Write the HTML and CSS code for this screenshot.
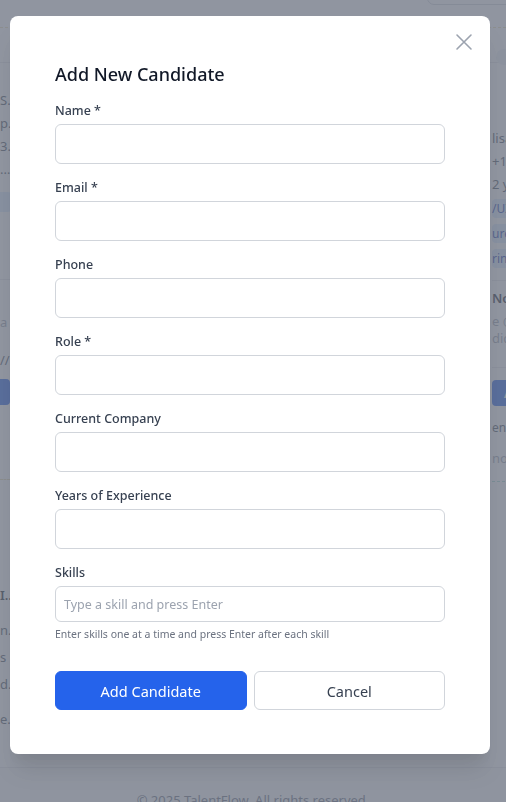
FILE: index.html
```html
<!DOCTYPE html>
<html lang="en">
<head>
<meta charset="utf-8">
<title>Add New Candidate</title>
<link rel="stylesheet" href="styles.css">
</head>
<body>
<div class="page">
  <header class="topbar"><div class="topbar-btn"></div></header>
  <div class="subbar"></div>
  <main class="main">
    <section class="col col-left">
      <p class="bg-t l1">Senior Designer</p>
      <p class="bg-t l2">product@acme.io</p>
      <p class="bg-t l3">3 years</p>
      <p class="bg-t l4">...</p>
      <span class="bg-pill"></span>
      <div class="bg-rule r1"></div>
      <p class="bg-t l5">a</p>
      <p class="bg-t l6">//</p>
      <div class="bg-btn"></div>
      <div class="bg-dash"></div>
      <p class="bg-h l7">ICONS</p>
      <p class="bg-t l8">name</p>
      <p class="bg-t l9">s</p>
      <p class="bg-t l10">dis</p>
      <p class="bg-t l11">es</p>
    </section>
    <section class="col col-mid"></section>
    <section class="col col-right">
      <span class="bg-dot"></span>
      <p class="bg-t rr1">lisa@mail.com</p>
      <p class="bg-t rr2">+1 555 0100</p>
      <p class="bg-t rr3">2 years</p>
      <span class="bg-tag">/UX</span>
      <span class="bg-tag">ures</span>
      <span class="bg-tag">ring</span>
      <div class="bg-rule r2"></div>
      <p class="bg-h rr4">Notes</p>
      <p class="bg-t rr5">e @team</p>
      <p class="bg-t rr6">didate</p>
      <div class="bg-rule r3"></div>
      <div class="bg-btn bg-btn-r">A</div>
      <p class="bg-t rr7">ent</p>
      <p class="bg-t rr8">no</p>
      <div class="bg-dash teal"></div>
    </section>
  </main>
  <footer class="footer">© 2025 TalentFlow. All rights reserved.</footer>
</div>

<div class="overlay">
  <div class="modal">
    <button class="close" type="button" aria-label="Close">
      <svg width="24" height="24" viewBox="0 0 24 24" fill="none" stroke="currentColor" stroke-width="1.6" stroke-linecap="round"><path d="M5 5L19 19M19 5L5 19"/></svg>
    </button>
    <h2 class="title">Add New Candidate</h2>
    <form class="form">
      <div class="field"><label class="label">Name *</label><input class="input" type="text"></div>
      <div class="field"><label class="label">Email *</label><input class="input" type="text"></div>
      <div class="field"><label class="label">Phone</label><input class="input" type="text"></div>
      <div class="field"><label class="label">Role *</label><input class="input" type="text"></div>
      <div class="field"><label class="label">Current Company</label><input class="input" type="text"></div>
      <div class="field"><label class="label">Years of Experience</label><input class="input" type="text"></div>
      <div class="field">
        <label class="label">Skills</label>
        <input class="input input-sm" type="text" placeholder="Type a skill and press Enter">
        <p class="help">Enter skills one at a time and press Enter after each skill</p>
      </div>
      <div class="actions">
        <button class="btn btn-primary" type="button">Add Candidate</button>
        <button class="btn btn-secondary" type="button">Cancel</button>
      </div>
    </form>
  </div>
</div>
</body>
</html>
```
FILE: styles.css
```css
* { box-sizing: border-box; }
html, body { margin: 0; padding: 0; }
body {
  width: 506px;
  height: 802px;
  overflow: hidden;
  font-family: "Noto Sans", "Open Sans", sans-serif;
  background: #f9fafb;
  color: #374151;
}

/* ---------- background page ---------- */
.page { width: 506px; height: 802px; overflow: hidden; display: flex; flex-direction: column; }
.page > * { flex-shrink: 0; }
.topbar {
  height: 28px;
  border-bottom: 1px dashed #e9dfb6;
  display: flex;
  justify-content: flex-end;
  background: #fff;
}
.topbar-btn {
  width: 110px;
  height: 36px;
  margin-top: -31px;
  margin-right: -31px;
  border: 1px solid #d1d5db;
  border-radius: 7px;
  background: #fff;
}
.subbar { height: 35px; border-bottom: 1px solid #e5e7eb; background: #fff; }
.main {
  display: grid;
  grid-template-columns: 10px 480px 120px;
  height: 705px;
  border-bottom: 1px solid #e5e7eb;
}
.col { display: flex; flex-direction: column; min-width: 0; }
.col-left { background: #fff; }
.col-right { background: #fff; padding-left: 2px; }
.bg-t, .bg-h {
  margin: 0;
  font-size: 13px;
  line-height: 18px;
  white-space: nowrap;
  overflow: hidden;
  text-overflow: ellipsis;
  color: #4b5563;
}
.bg-h { font-weight: 600; color: #1f2937; }
.col-left .bg-t, .col-left .bg-h { width: 10px; }
.l1 { margin-top: 28px; }
.l2, .l3, .l4 { margin-top: 5px; }
.bg-pill { display: block; width: 30px; height: 20px; margin: 14px 0 0 -12px; border-radius: 10px; background: #dbeafe; }
.bg-rule { height: 1px; background: #e5e7eb; }
.r1 { margin-top: 67px; }
.l5 { margin-top: 33px; color: #9ca3af; }
.l6 { margin-top: 20px; }
.bg-btn { height: 26px; margin-top: 10px; background: #2563eb; border-radius: 0 4px 4px 0; color: #fff; font-size: 14px; font-weight: 600; line-height: 26px; }
.bg-dash { height: 1px; margin-top: 74px; border-top: 1px dashed #e6dbb0; }
.bg-dash.teal { border-top-color: #a7dbd3; }
.l7 { margin-top: 106px; }
.l8 { margin-top: 17px; }
.l9, .l10 { margin-top: 9px; }
.l11 { margin-top: 17px; }

.bg-dot { display: block; width: 16px; height: 16px; border-radius: 8px; background: #eef2f7; margin-top: -14px; margin-left: 4px; }
.rr1 { margin-top: 64px; }
.rr2, .rr3 { margin-top: 5px; }
.bg-tag {
  align-self: flex-start;
  margin-top: 6px;
  padding: 0 6px 0 0;
  font-size: 12px;
  line-height: 19px;
  color: #1e40af;
  background: #dbeafe;
  border-radius: 4px;
}
.bg-tag + .bg-tag { margin-top: 6px; }
.r2 { margin-top: 12px; }
.rr4 { margin-top: 8px; }
.rr5 { margin-top: 5px; color: #9ca3af; }
.rr6 { margin-top: 0; line-height: 16px; color: #9ca3af; }
.r3 { margin-top: 21px; }
.bg-btn-r { margin-top: 12px; border-radius: 4px; padding-left: 12px; }
.rr7 { margin-top: 13px; font-size: 12px; }
.rr8 { margin-top: 12px; color: #9ca3af; }
.col-right .bg-dash { margin-top: 14px; }

.footer {
  height: 34px;
  text-align: center;
  font-size: 13px;
  line-height: 18px;
  padding-top: 23px;
  color: #6b7280;
  background: #f9fafb;
  white-space: nowrap;
}

/* ---------- overlay + modal ---------- */
.overlay {
  position: fixed;
  inset: 0;
  background: rgba(107, 114, 128, 0.75);
  padding: 16px 0 0 10px;
}
.modal {
  position: relative;
  width: 480px;
  height: 738px;
  background: #fff;
  border-radius: 8px;
  padding: 44px 45px 44px;
  box-shadow: 0 20px 25px -5px rgba(0, 0, 0, 0.1), 0 10px 10px -5px rgba(0, 0, 0, 0.04);
}
.close {
  position: absolute;
  top: 14px;
  right: 14px;
  width: 24px;
  height: 24px;
  padding: 0;
  border: 0;
  background: transparent;
  color: #9ca3af;
  display: flex;
}
.title {
  margin: 0 0 13px;
  font-size: 18px;
  line-height: 28px;
  font-weight: 500;
  color: #111827;
}
.form { display: flex; flex-direction: column; gap: 14px; }
.field { display: flex; flex-direction: column; gap: 3px; }
.label {
  font-size: 12.5px;
  line-height: 20px;
  font-weight: 500;
  color: #374151;
}
.input {
  width: 100%;
  height: 40px;
  border: 1px solid #d1d5db;
  border-radius: 6px;
  padding: 0 8px;
  font: inherit;
  font-size: 12.5px;
  color: #111827;
  background: #fff;
}
.input-sm { height: 36px; }
.input::placeholder { color: #9ca3af; }
.help {
  margin: 1px 0 0;
  font-size: 10.5px;
  line-height: 16px;
  color: #6b7280;
}
.actions {
  display: grid;
  grid-template-columns: 1fr 1fr;
  gap: 7px;
  margin-top: 15px;
}
.btn {
  height: 39px;
  border-radius: 6px;
  font-family: inherit;
  font-size: 14.5px;
  line-height: 20px;
}
.btn-primary { background: #2563eb; border: 1px solid #2563eb; color: #fff; }
.btn-secondary { background: #fff; border: 1px solid #d1d5db; color: #374151; }
```
